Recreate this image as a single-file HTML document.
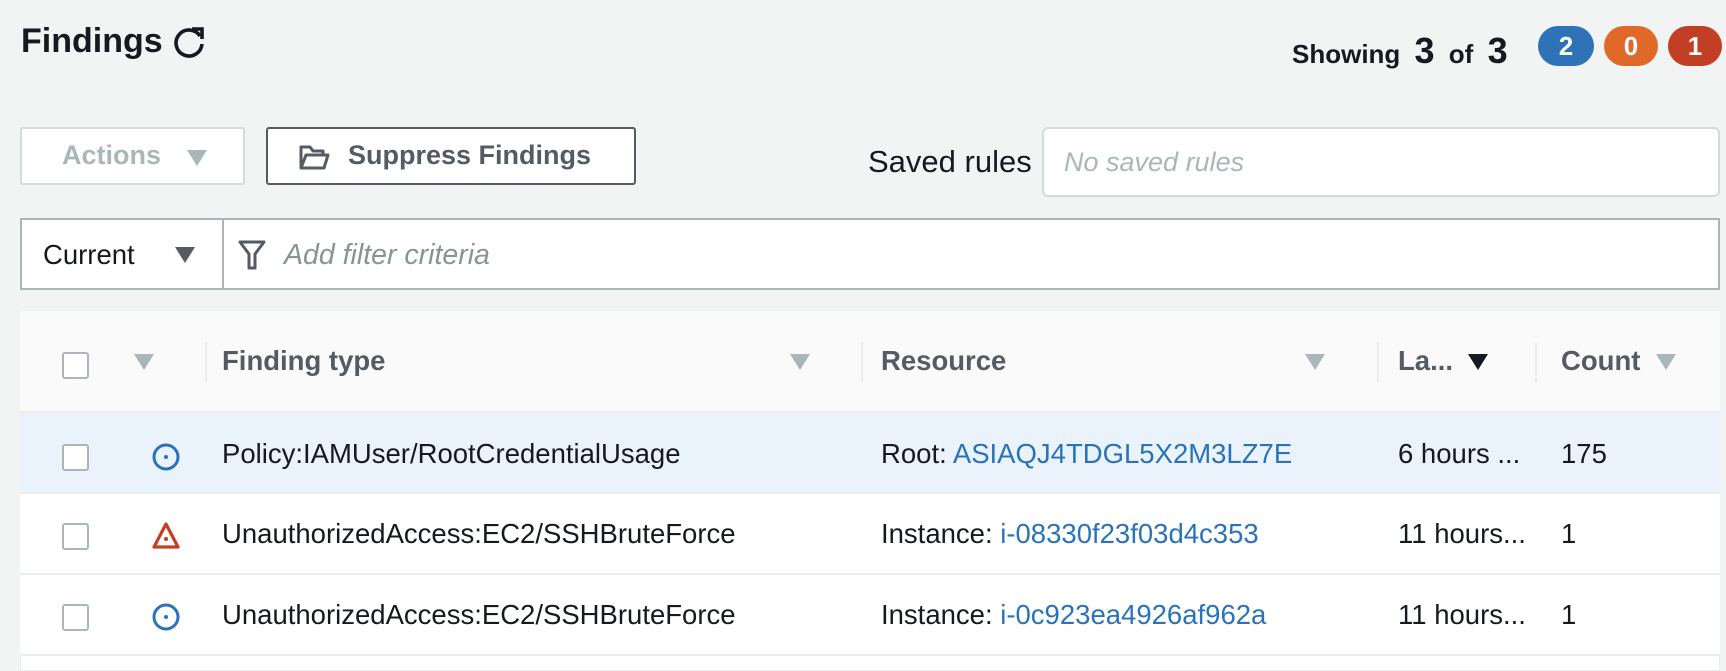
<!DOCTYPE html>
<html><head><meta charset="utf-8"><style>
*{box-sizing:border-box;margin:0;padding:0}
body{width:1726px;height:664px;background:#f2f3f3;font-family:"Liberation Sans",sans-serif;position:relative;overflow:hidden;color:#16191f}
.a{position:absolute}
.tri{width:0;height:0;border-left:10px solid transparent;border-right:10px solid transparent;border-top:16px solid #aab7b8;position:absolute}
.cb{position:absolute;width:27px;height:27px;border:2px solid #aab7b8;border-radius:3px;background:#fff;left:62px}
.row{position:absolute;left:20px;width:1700px;border-bottom:2px solid #eaeded;background:#fff}
.t{position:absolute;font-size:27.5px;white-space:nowrap}
.lnk{color:#2a73b9}
.hd{position:absolute;font-size:27.5px;font-weight:bold;color:#545b64;top:34px}
.dv{position:absolute;width:2px;height:40px;background:#eaeded;top:31px}
.badge{position:absolute;top:26px;height:40px;border-radius:20px;color:#fff;font-size:26px;text-align:center;line-height:40px;font-weight:bold}
</style></head><body>
<div class="a" style="left:21px;top:22px;font-size:34px;font-weight:bold">Findings</div>
<svg class="a" style="left:173px;top:26px" width="34" height="32" viewBox="0 0 34 32"><path d="M27 10 A13 13 0 1 0 29 18" fill="none" stroke="#16191f" stroke-width="3.6"/><path d="M19 3 L29 3 L29 13" fill="none" stroke="#16191f" stroke-width="3.6"/></svg>

<div class="a" style="left:1292px;top:30px;font-size:26px;font-weight:bold;white-space:nowrap;word-spacing:7px">Showing <span style="font-size:36px">3</span> of <span style="font-size:36px">3</span></div>
<div class="badge" style="left:1538px;width:56px;background:#2e73b8">2</div>
<div class="badge" style="left:1604px;width:54px;background:#e0692a">0</div>
<div class="badge" style="left:1668px;width:54px;background:#c23f25">1</div>

<div class="a" style="left:20px;top:127px;width:225px;height:58px;border:2px solid #d5dbdb;border-radius:3px;background:#fff"></div>
<div class="a" style="left:62px;top:140px;font-size:27px;font-weight:bold;color:#aab7b8">Actions</div>
<div class="tri" style="left:187px;top:150px"></div>

<div class="a" style="left:266px;top:127px;width:370px;height:58px;border:2px solid #545b64;border-radius:3px;background:#fff"></div>
<svg class="a" style="left:298px;top:143px" width="33" height="28" viewBox="0 0 33 28"><path d="M3 25 V4 H12 L15 8 H25 V12 M3 25 L8 12 H30 L26 25 Z" fill="none" stroke="#545b64" stroke-width="3" stroke-linejoin="round"/></svg>
<div class="a" style="left:348px;top:140px;font-size:27px;font-weight:bold;color:#545b64">Suppress Findings</div>

<div class="a" style="left:868px;top:144px;font-size:31px">Saved rules</div>
<div class="a" style="left:1042px;top:127px;width:678px;height:70px;border:2px solid #d5dbdb;border-radius:6px;background:#fff"></div>
<div class="a" style="left:1064px;top:147px;font-size:27px;font-style:italic;color:#aab7b8">No saved rules</div>

<div class="a" style="left:20px;top:218px;width:1700px;height:72px;border:2px solid #aab7b8;background:#fff"></div>
<div class="a" style="left:222px;top:220px;width:2px;height:68px;background:#aab7b8"></div>
<div class="a" style="left:43px;top:239px;font-size:27.5px">Current</div>
<div class="tri" style="left:175px;top:247px;border-top-color:#545b64"></div>
<svg class="a" style="left:238px;top:240px" width="28" height="30" viewBox="0 0 28 30"><path d="M2 2 H26 L17 14 V28 H11 V14 Z" fill="none" stroke="#545b64" stroke-width="3" stroke-linejoin="round"/></svg>
<div class="a" style="left:284px;top:239px;font-size:28.5px;font-style:italic;color:#879596">Add filter criteria</div>

<div class="a" style="left:20px;top:311px;width:1700px;height:360px;background:#fff;border:1px solid #eaeded"></div>
<div class="a" style="left:20px;top:311px;width:1700px;height:102px;background:#fafafa;border-bottom:2px solid #eaeded">
  <div class="cb" style="left:42px;top:41px"></div>
  <div class="tri" style="left:114px;top:43px"></div>
  <div class="dv" style="left:185px"></div>
  <div class="hd" style="left:202px">Finding type</div>
  <div class="tri" style="left:770px;top:43px"></div>
  <div class="dv" style="left:841px"></div>
  <div class="hd" style="left:861px">Resource</div>
  <div class="tri" style="left:1285px;top:43px"></div>
  <div class="dv" style="left:1357px"></div>
  <div class="hd" style="left:1378px">La...</div>
  <div class="tri" style="left:1448px;top:43px;border-top-color:#16191f"></div>
  <div class="dv" style="left:1515px"></div>
  <div class="hd" style="left:1541px">Count</div>
  <div class="tri" style="left:1636px;top:43px"></div>
</div>

<div class="row" style="top:413px;height:81px;background:#eaf3fc">
  <div class="cb" style="left:42px;top:31px"></div>
  <svg class="a" style="left:131px;top:29px" width="30" height="30" viewBox="0 0 30 30"><circle cx="15" cy="15" r="12" fill="none" stroke="#2a73b9" stroke-width="3"/><circle cx="15" cy="15" r="2" fill="#2a73b9"/></svg>
  <div class="t" style="left:202px;top:25px">Policy:IAMUser/RootCredentialUsage</div>
  <div class="t" style="left:861px;top:25px">Root: <span class="lnk">ASIAQJ4TDGL5X2M3LZ7E</span></div>
  <div class="t" style="left:1378px;top:25px">6 hours ...</div>
  <div class="t" style="left:1541px;top:25px">175</div>
</div>
<div class="row" style="top:494px;height:81px">
  <div class="cb" style="left:42px;top:29px"></div>
  <svg class="a" style="left:131px;top:26px" width="30" height="30" viewBox="0 0 30 30"><path d="M15 4 L27 27 H3 Z" fill="none" stroke="#c23f25" stroke-width="3.2" stroke-linejoin="round"/><circle cx="15" cy="19" r="2" fill="#c23f25"/></svg>
  <div class="t" style="left:202px;top:24px">UnauthorizedAccess:EC2/SSHBruteForce</div>
  <div class="t" style="left:861px;top:24px">Instance: <span class="lnk">i-08330f23f03d4c353</span></div>
  <div class="t" style="left:1378px;top:24px">11 hours...</div>
  <div class="t" style="left:1541px;top:24px">1</div>
</div>
<div class="row" style="top:575px;height:81px">
  <div class="cb" style="left:42px;top:29px"></div>
  <svg class="a" style="left:131px;top:27px" width="30" height="30" viewBox="0 0 30 30"><circle cx="15" cy="15" r="12" fill="none" stroke="#2a73b9" stroke-width="3"/><circle cx="15" cy="15" r="2" fill="#2a73b9"/></svg>
  <div class="t" style="left:202px;top:24px">UnauthorizedAccess:EC2/SSHBruteForce</div>
  <div class="t" style="left:861px;top:24px">Instance: <span class="lnk">i-0c923ea4926af962a</span></div>
  <div class="t" style="left:1378px;top:24px">11 hours...</div>
  <div class="t" style="left:1541px;top:24px">1</div>
</div>
</body></html>
